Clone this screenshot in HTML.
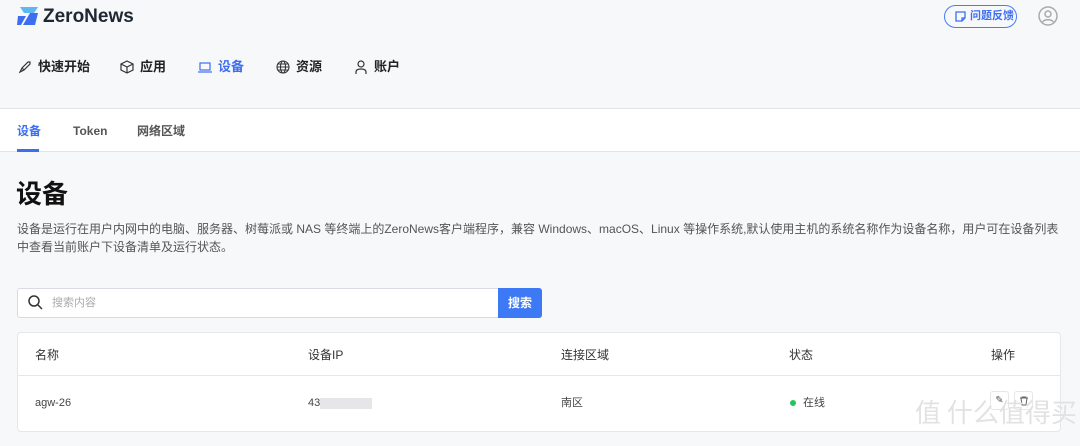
<!DOCTYPE html>
<html><head><meta charset="utf-8"><style>
*{margin:0;padding:0;box-sizing:border-box}
body{width:1080px;height:446px;overflow:hidden;background:#f7f8fa;font-family:"Liberation Sans","Noto Sans CJK SC",sans-serif;color:#222;position:relative}
.a{position:absolute}
.nav span{position:absolute;top:58px;line-height:18px;font-size:13px;font-weight:bold;color:#222;display:flex;align-items:center;gap:6px}
.nav svg{width:14px;height:14px}
.tabs{position:absolute;left:0;top:108px;width:1080px;height:44px;background:#fff;border-top:1px solid #e3e4e8;border-bottom:1px solid #e3e4e8}
.tabs span{position:absolute;top:13px;line-height:18px;font-size:12px;font-weight:bold;color:#555}
.card{position:absolute;left:17px;top:332px;width:1044px;height:100px;background:#fff;border:1px solid #e6e7eb;border-radius:4px}
.card .h{position:absolute;top:13px;line-height:18px;font-size:12px;color:#333}
.card .r{position:absolute;top:61px;line-height:18px;font-size:11px;color:#444}
</style></head><body>
<svg class="a" style="left:17px;top:7px" width="24" height="18" viewBox="0 0 24 18"><path d="M3 0h18l-4 6H7z" fill="#5bb8f5"/><path d="M1 9h8l-5 9H0z" fill="#3d6ef0"/><path d="M13 6h8l-3 12H6z" fill="#3d6ef0"/></svg>
<div class="a" style="left:43px;top:5px;font-size:19px;line-height:24px;font-weight:bold;color:#1f2733">ZeroNews</div>
<div class="a" style="left:944px;top:5px;width:73px;height:23px;border:1.5px solid #4a7cf0;border-radius:12px;font-size:11px;line-height:18px;color:#3d6ef0;font-weight:bold;padding:1px 0 0 25px;white-space:nowrap">问题反馈</div>
<svg class="a" style="left:955px;top:11px" width="11" height="11" viewBox="0 0 11 11"><path d="M1 1h9v6l-3 3H1z M7 10V7h3" fill="none" stroke="#3d6ef0" stroke-width="1.3"/></svg>
<svg class="a" style="left:1038px;top:6px" width="20" height="20" viewBox="0 0 20 20" fill="none" stroke="#aaa" stroke-width="1.5"><circle cx="10" cy="10" r="9"/><circle cx="10" cy="8" r="3"/><path d="M4.5 16c2-3 9-3 11 0"/></svg>
<div class="nav">
<span style="left:18px"><svg viewBox="0 0 14 14" fill="none" stroke="#333" stroke-width="1.2"><path d="M2 12l2-4 6-6 2 0 0 2-6 6z M4 8l2 2"/></svg>快速开始</span>
<span style="left:120px"><svg viewBox="0 0 14 14" fill="none" stroke="#333" stroke-width="1.2"><path d="M7 1l6 3v6l-6 3-6-3V4z M1 4l6 3 6-3 M7 7v6"/></svg>应用</span>
<span style="left:198px;color:#3d6ef0"><svg viewBox="0 0 14 14" fill="none" stroke="#3d6ef0" stroke-width="1.2"><rect x="2" y="3" width="10" height="7"/><path d="M0 12h14"/></svg>设备</span>
<span style="left:276px"><svg viewBox="0 0 14 14" fill="none" stroke="#333" stroke-width="1.1"><circle cx="7" cy="7" r="6"/><ellipse cx="7" cy="7" rx="2.5" ry="6"/><path d="M1 7h12M2 4h10M2 10h10"/></svg>资源</span>
<span style="left:354px"><svg viewBox="0 0 14 14" fill="none" stroke="#333" stroke-width="1.2"><circle cx="7" cy="4" r="3"/><path d="M2 14v-2c0-2 2-3 5-3s5 1 5 3v2"/></svg>账户</span>
</div>
<div class="tabs">
<span style="left:17px;color:#3d6ef0">设备</span>
<div class="a" style="left:17px;top:40px;width:22px;height:3px;background:#3d6ef0"></div>
<span style="left:73px">Token</span>
<span style="left:137px">网络区域</span>
</div>
<div class="a" style="left:16px;top:177px;font-size:26px;line-height:34px;font-weight:bold;color:#111">设备</div>
<div class="a" style="left:17px;top:220px;width:1050px;font-size:12px;line-height:18px;color:#555">设备是运行在用户内网中的电脑、服务器、树莓派或 NAS 等终端上的ZeroNews客户端程序，兼容 Windows、macOS、Linux 等操作系统,默认使用主机的系统名称作为设备名称，用户可在设备列表中查看当前账户下设备清单及运行状态。</div>
<div class="a" style="left:17px;top:288px;width:525px;height:30px;background:#fff;border:1px solid #d8dbe2;border-radius:3px"></div>
<svg class="a" style="left:28px;top:295px" width="15" height="15" viewBox="0 0 15 15" fill="none" stroke="#333" stroke-width="1.5"><circle cx="6" cy="6" r="5"/><path d="M10 10l4 4"/></svg>
<div class="a" style="left:52px;top:294px;line-height:18px;font-size:11px;color:#aaa">搜索内容</div>
<div class="a" style="left:498px;top:288px;width:44px;height:30px;background:#3d78f5;border-radius:0 3px 3px 0;color:#fff;font-size:12px;font-weight:bold;text-align:center;line-height:30px">搜索</div>
<div class="card">
<div class="a" style="left:0;top:42px;width:100%;height:1px;background:#e6e7eb"></div>
<span class="h" style="left:17px">名称</span>
<span class="h" style="left:290px">设备IP</span>
<span class="h" style="left:543px">连接区域</span>
<span class="h" style="left:771px">状态</span>
<span class="h" style="left:973px">操作</span>
<span class="r" style="left:17px">agw-26</span>
<span class="r" style="left:290px">43</span>
<div class="a" style="left:302px;top:65px;width:52px;height:11px;background:#e6e6e8"></div>
<span class="r" style="left:543px">南区</span>
<div class="a" style="left:772px;top:67px;width:6px;height:6px;border-radius:50%;background:#22c55e"></div>
<span class="r" style="left:785px">在线</span>
<div class="a" style="left:972px;top:58px;width:19px;height:19px;border:1px solid #e6e7eb;border-radius:3px;font-size:10px;text-align:center;line-height:17px;color:#555">✎</div>
<div class="a" style="left:996px;top:58px;width:19px;height:19px;border:1px solid #e6e7eb;border-radius:3px"></div>
<svg class="a" style="left:1001px;top:63px" width="10" height="10" viewBox="0 0 10 10" fill="none" stroke="#666"><path d="M1 2h8M3 2V1h4v1M2 2l1 7h4l1-7"/></svg>
</div>
<div class="a" style="left:915px;top:395px;font-size:26px;line-height:34px;color:#e2e2e2;font-family:'Noto Sans CJK SC',sans-serif">值 什么值得买</div>
</body></html>
